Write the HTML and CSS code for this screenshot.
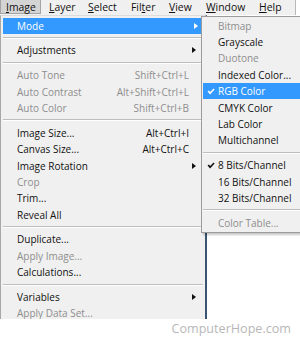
FILE: index.html
```html
<!DOCTYPE html>
<html lang="en">
<head>
  <meta charset="UTF-8">
  <meta name="viewport" content="width=device-width, initial-scale=1.0">
  <title>Image Menu</title>
  <link rel="stylesheet" href="styles.css">
</head>
<body>
  <div class="menubar">
    <span class="bar-item bar-open"><u>I</u>mage</span>
    <span class="bar-item bar-layer"><u>L</u>ayer</span>
    <span class="bar-item bar-select"><u>S</u>elect</span>
    <span class="bar-item bar-filter">Fil<u>t</u>er</span>
    <span class="bar-item bar-view"><u>V</u>iew</span>
    <span class="bar-item bar-window"><u>W</u>indow</span>
    <span class="bar-item bar-help"><u>H</u>elp</span>
  </div>

  <div class="stage">
    <ul class="menu menu-main">
      <li class="item active"><span class="label">Mode</span><span class="arrow"></span></li>
      <li class="sep"></li>
      <li class="item"><span class="label">Adjustments</span><span class="arrow"></span></li>
      <li class="sep"></li>
      <li class="item disabled"><span class="label">Auto Tone</span><span class="keys">Shift+Ctrl+L</span></li>
      <li class="item disabled"><span class="label">Auto Contrast</span><span class="keys">Alt+Shift+Ctrl+L</span></li>
      <li class="item disabled"><span class="label">Auto Color</span><span class="keys">Shift+Ctrl+B</span></li>
      <li class="sep"></li>
      <li class="item"><span class="label">Image Size...</span><span class="keys">Alt+Ctrl+I</span></li>
      <li class="item"><span class="label">Canvas Size...</span><span class="keys">Alt+Ctrl+C</span></li>
      <li class="item"><span class="label">Image Rotation</span><span class="arrow"></span></li>
      <li class="item disabled"><span class="label">Crop</span></li>
      <li class="item"><span class="label">Trim...</span></li>
      <li class="item"><span class="label">Reveal All</span></li>
      <li class="sep"></li>
      <li class="item"><span class="label">Duplicate...</span></li>
      <li class="item disabled"><span class="label">Apply Image...</span></li>
      <li class="item"><span class="label">Calculations...</span></li>
      <li class="sep"></li>
      <li class="item"><span class="label">Variables</span><span class="arrow"></span></li>
      <li class="item disabled"><span class="label">Apply Data Set...</span></li>
    </ul>

    <ul class="menu menu-sub">
      <li class="item disabled"><span class="check"></span><span class="label">Bitmap</span></li>
      <li class="item"><span class="check"></span><span class="label">Grayscale</span></li>
      <li class="item disabled"><span class="check"></span><span class="label">Duotone</span></li>
      <li class="item"><span class="check"></span><span class="label">Indexed Color...</span></li>
      <li class="item active">
        <span class="check"><svg width="8" height="7" viewBox="0 0 8 7"><path d="M0.5 3.6 L2 2.4 L3.1 4 L6.6 0.4 L7.6 1.4 L3.1 6.4 Z" fill="currentColor"/></svg></span>
        <span class="label">RGB Color</span>
      </li>
      <li class="item"><span class="check"></span><span class="label">CMYK Color</span></li>
      <li class="item"><span class="check"></span><span class="label">Lab Color</span></li>
      <li class="item"><span class="check"></span><span class="label">Multichannel</span></li>
      <li class="sep"></li>
      <li class="item">
        <span class="check"><svg width="8" height="7" viewBox="0 0 8 7"><path d="M0.5 3.6 L2 2.4 L3.1 4 L6.6 0.4 L7.6 1.4 L3.1 6.4 Z" fill="currentColor"/></svg></span>
        <span class="label">8 Bits/Channel</span>
      </li>
      <li class="item"><span class="check"></span><span class="label">16 Bits/Channel</span></li>
      <li class="item"><span class="check"></span><span class="label">32 Bits/Channel</span></li>
      <li class="sep"></li>
      <li class="item disabled"><span class="check"></span><span class="label">Color Table...</span></li>
    </ul>

    <div class="watermark">ComputerHope.com</div>
  </div>
</body>
</html>
```

FILE: styles.css
```css
body {
  margin: 0;
  background: #ffffff;
  font-family: 'Open Sans', 'Noto Sans', Arial, sans-serif;
  font-size: 10px;
  color: #111111;
  width: 300px;
  height: 337px;
  overflow: hidden;
}

ul {
  list-style: none;
  margin: 0;
  padding: 0;
}

/* top menu bar */
.menubar {
  display: flex;
  height: 15px;
  background: #f0f0f0;
  box-sizing: border-box;
  border-right: 1px solid #b8b8b8;
  width: 296px;
  font-size: 10.4px;
  line-height: 14px;
}

.bar-item {
  padding-left: 4px;
  height: 14px;
  box-sizing: border-box;
}

.bar-item u {
  text-decoration-thickness: 1px;
  text-underline-offset: 1px;
}

.bar-open {
  width: 41px;
  padding-left: 5px;
  background: #d4d4d4;
  border: 1px solid #a4a4a4;
  border-top: none;
}

.bar-layer { margin-left: 4px; width: 39px; }
.bar-select { width: 43px; }
.bar-filter { width: 38px; }
.bar-view { width: 37px; }
.bar-window { width: 53px; }

.stage {
  position: relative;
}

/* dropdown menus */
.menu {
  background: #f0f0f0;
  box-sizing: border-box;
}

.menu-main {
  width: 207px;
  height: 304px;
  overflow: hidden;
  border-left: 1px solid #a8a8a8;
  border-right: 2px solid #3a5572;
  border-top: 1px solid #dcdcdc;
  padding: 1.5px 2px 0 2px;
}

.menu-sub {
  position: absolute;
  left: 201px;
  top: 1px;
  width: 100px;
  border: 1px solid #9c9c9c;
  border-right: none;
  padding: 0.5px 0 1px 1px;
  box-shadow: 2px 2px 2px rgba(0, 0, 0, 0.22);
}

.item {
  display: flex;
  align-items: center;
  height: 16.4px;
  padding: 0 6px 0 14px;
  white-space: nowrap;
}

.item .label {
  flex: 1;
}

.item.disabled {
  color: #8e8e8e;
}

.item.active {
  background: #3399ff;
  color: #ffffff;
}

.menu-main .item.active {
  margin-right: -2px;
}

.keys {
  margin-right: 8px;
}

.arrow {
  width: 0;
  height: 0;
  border-left: 4px solid #111111;
  border-top: 3.5px solid transparent;
  border-bottom: 3.5px solid transparent;
  margin-right: 1px;
}

.item.active .arrow {
  border-left-color: #ffffff;
}

.menu-sub .item {
  padding: 0 0 0 4px;
}

.check {
  width: 11px;
  display: flex;
  align-items: center;
  color: #111111;
}

.item.active .check {
  color: #ffffff;
}

.sep {
  margin: 3.2px 0;
  border-top: 1px solid #bdbdbd;
  border-bottom: 1px solid #ffffff;
}

.watermark {
  text-align: right;
  padding: 2px 9px 0 0;
  font-size: 12.6px;
  line-height: 15px;
  color: #b7b7b7;
}
```
